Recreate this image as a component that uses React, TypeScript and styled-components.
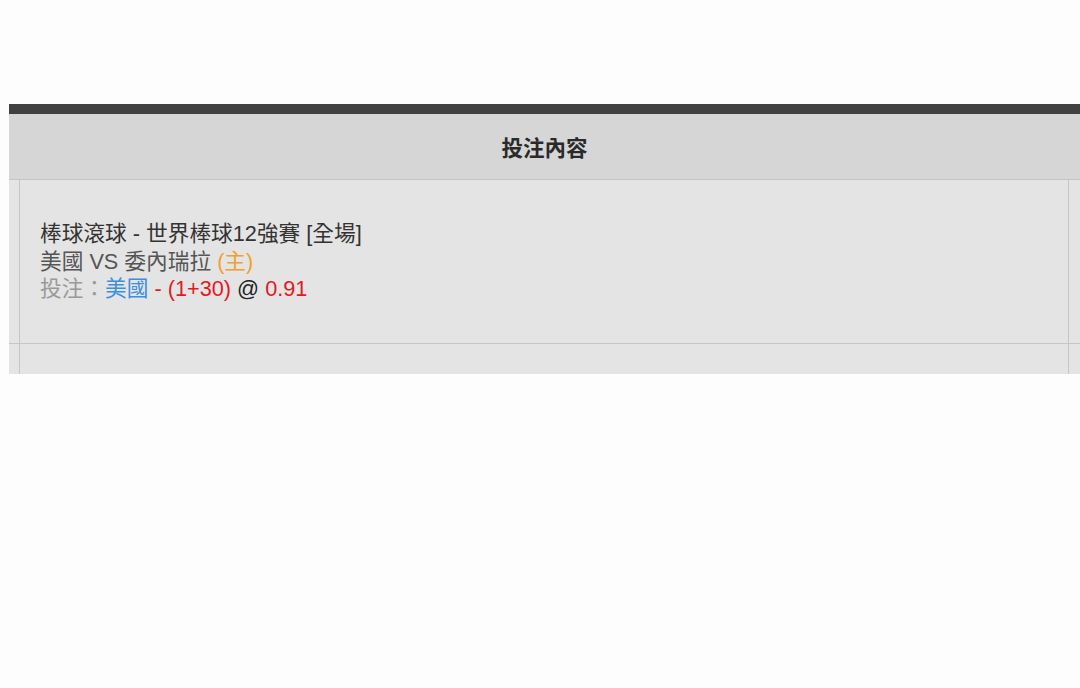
import React from "react";
import styled, { createGlobalStyle } from "styled-components";

const GlobalStyle = createGlobalStyle`
  html, body {
    margin: 0;
    padding: 0;
    background: #fdfdfd;
    font-family: "Liberation Sans", "Noto Sans CJK TC", sans-serif;
  }
`;

const Page = styled.main`
  padding: 104px 0 0 9px;
`;

const Board = styled.section`
  width: 100%;
  border-top: 10px solid #414141;
`;

const HeaderRow = styled.div`
  height: 65px;
  background: #d6d6d6;
  border-bottom: 1px solid #c4c4c4;
  display: flex;
  align-items: center;
  justify-content: center;
  font-size: 21.5px;
  font-weight: 700;
  color: #2a2a2a;
`;

const Row = styled.div<{ $height?: number; $border?: boolean }>`
  display: grid;
  grid-template-columns: 11px 1fr 12px;
  background: #e4e4e4;
  border-bottom: ${(p) => (p.$border ? "1px solid #c6c6c6" : "none")};
  min-height: ${(p) => p.$height ?? 30}px;
`;

const SideCell = styled.div<{ $right?: boolean }>`
  ${(p) => (p.$right ? "border-left" : "border-right")}: 1px solid #c6c6c6;
`;

const ContentCell = styled.div`
  padding: 40px 20px;
  display: flex;
  flex-direction: column;
  justify-content: center;
  font-size: 21.7px;
  line-height: 27.5px;
  color: #333;
`;

const Line = styled.div<{ $tone?: string }>`
  color: ${(p) => p.$tone ?? "#333"};
  white-space: nowrap;
`;

const Tone = styled.span<{ $color: string }>`
  color: ${(p) => p.$color};
`;

export default function App() {
  return (
    <>
      <GlobalStyle />
      <Page>
        <Board>
          <HeaderRow>投注內容</HeaderRow>
          <Row $height={162} $border>
            <SideCell />
            <ContentCell>
              <Line>棒球滾球 - 世界棒球12強賽 [全場]</Line>
              <Line $tone="#555">
                美國 VS 委內瑞拉 <Tone $color="#f0a030">(主)</Tone>
              </Line>
              <Line $tone="#999">
                投注：<Tone $color="#3d8fdc">美國</Tone>{" "}
                <Tone $color="#e2191e">- (1+30)</Tone>{" "}
                <Tone $color="#222">@</Tone>{" "}
                <Tone $color="#e2191e">0.91</Tone>
              </Line>
            </ContentCell>
            <SideCell $right />
          </Row>
          <Row $height={30}>
            <SideCell />
            <div />
            <SideCell $right />
          </Row>
        </Board>
      </Page>
    </>
  );
}
